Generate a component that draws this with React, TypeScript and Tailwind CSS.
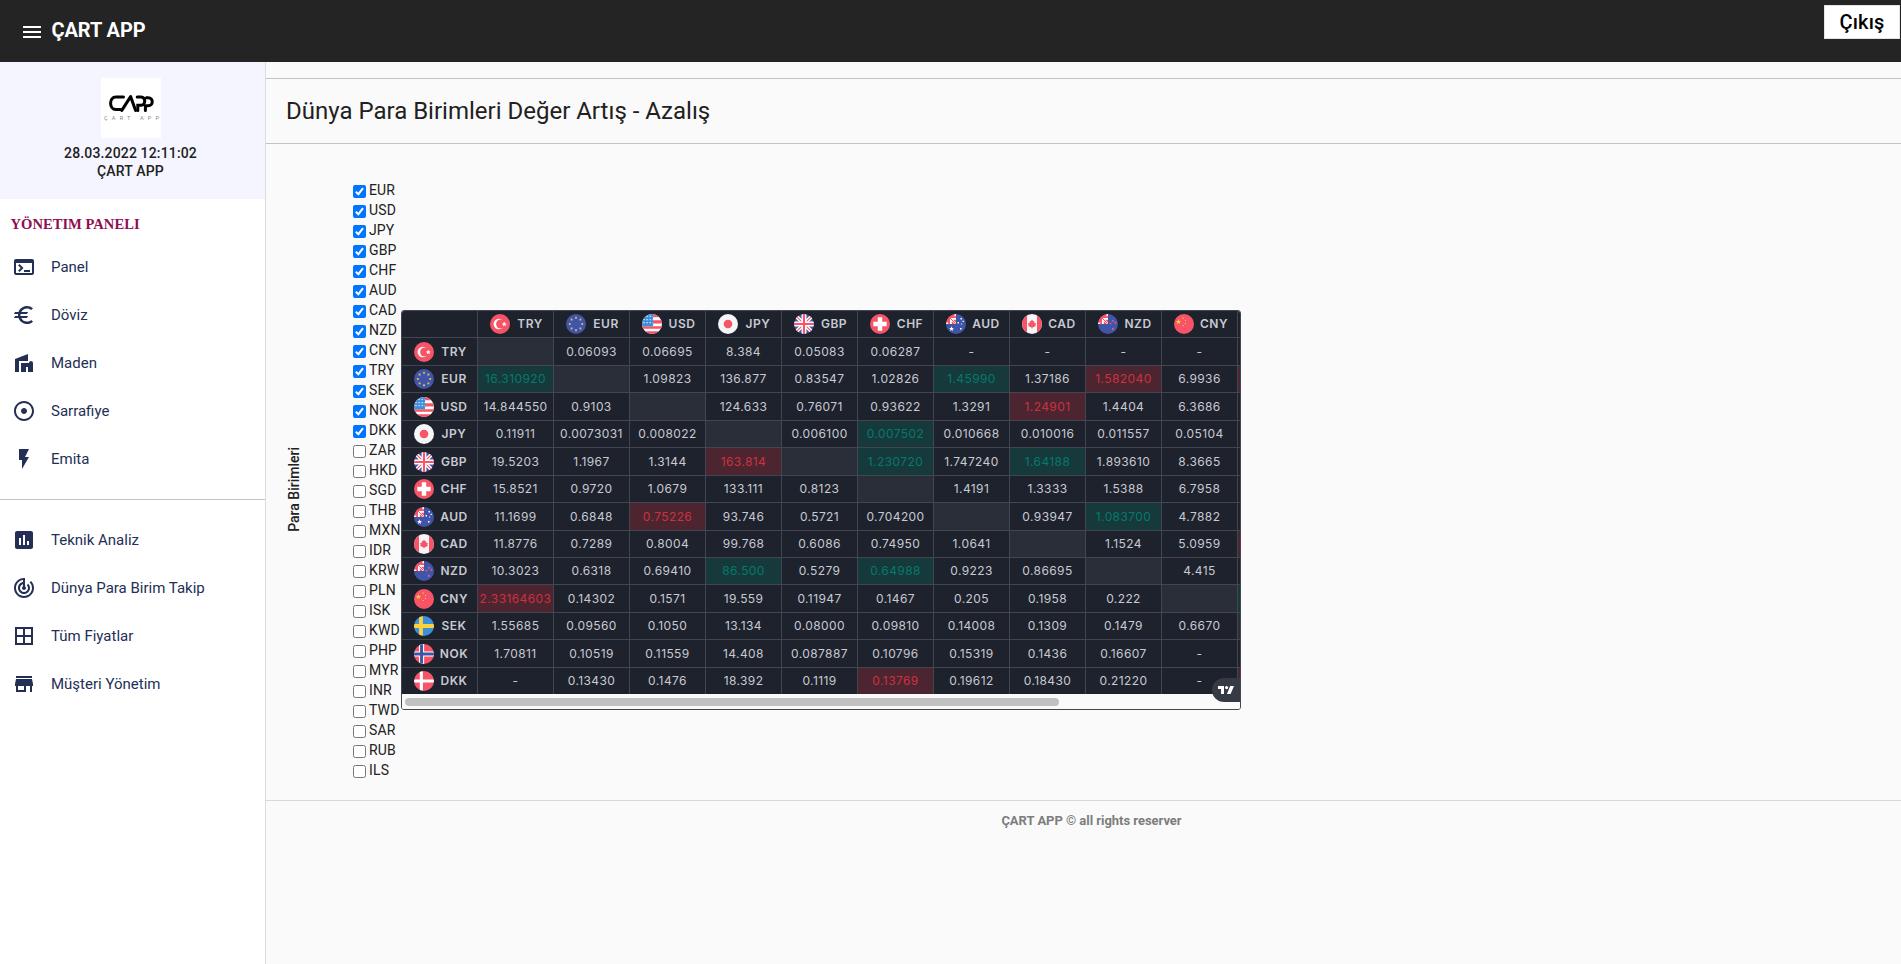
import type { ReactNode } from "react";
import type { IconType } from "react-icons";
import {
  MdAdjust,
  MdAssessment,
  MdBorderAll,
  MdEuro,
  MdFlashOn,
  MdMenu,
  MdStore,
  MdTerminal,
  MdTrackChanges,
  MdVilla,
} from "react-icons/md";

const RED = "#f75467";
const BLUE = "#4055a8";

const unionCorner = (
  <>
    <path fill={BLUE} d="M0 0h18v18H0z" />
    <path fill={RED} d="M0 0h9v9H0z" />
    <path fill="#fff" d="M0 7.6h2v1.4H0zM3.6 3.6h5.4v1.6H6.3L9 7.9V9H7.9L5.2 6.3V9H3.6z" />
    <path stroke={RED} strokeWidth=".9" d="M3.2 3.2l5.6 5.6" />
    <path fill="#fff" d="M7.6 0h1.4v2H7.6z" />
  </>
);

const stars: [number, number][] = [0, 45, 90, 135, 180, 225, 270, 315].map((a) => {
  const r = (a * Math.PI) / 180;
  return [9 + 5.6 * Math.sin(r), 9 - 5.6 * Math.cos(r)];
});

const flags: Record<string, ReactNode> = {
  TRY: (
    <>
      <path fill={RED} d="M0 0h18v18H0z" />
      <circle cx="8" cy="9" r="4.8" fill="#fff" />
      <circle cx="9.6" cy="9" r="4.1" fill={RED} />
      <path fill="#fff" d="M12.9 7l.6 1.4 1.5.1-1.1 1 .4 1.5-1.4-.8-1.3.8.3-1.5-1.4-.5 1.5-.6z" />
    </>
  ),
  EUR: (
    <>
      <path fill={BLUE} d="M0 0h18v18H0z" />
      {stars.map(([x, y], i) => (
        <rect key={i} x={x - 0.8} y={y - 0.8} width="1.6" height="1.6" fill="#e3c45c" />
      ))}
    </>
  ),
  USD: (
    <>
      <path fill="#fff" d="M0 0h18v18H0z" />
      <path fill={RED} d="M9 0h9v3H9zM9 5.6h9v3H9zM0 11h18v2.3H0zM0 15.6h18V18H0z" />
      <path fill="#3d8edb" d="M0 0h10v11H0z" />
      <path
        stroke="#d5e8fa"
        strokeWidth="1.1"
        strokeDasharray="1.2 1.6"
        d="M1.2 2.2H10M1.2 5H10M1.2 7.8H10"
      />
    </>
  ),
  JPY: (
    <>
      <path fill="#f5f6f8" d="M0 0h18v18H0z" />
      <circle cx="9" cy="9" r="3.9" fill={RED} />
    </>
  ),
  GBP: (
    <>
      <path fill={BLUE} d="M0 0h18v18H0z" />
      <path stroke="#fff" strokeWidth="3.4" d="M0 0l18 18M18 0L0 18" />
      <path stroke={RED} strokeWidth="1" d="M0 0l18 18M18 0L0 18" />
      <path stroke="#fff" strokeWidth="4.4" d="M9 0v18M0 9h18" />
      <path stroke={RED} strokeWidth="1.9" d="M9 0v18M0 9h18" />
    </>
  ),
  CHF: (
    <>
      <path fill={RED} d="M0 0h18v18H0z" />
      <path fill="#fff" d="M7 3h4v4h4v4h-4v4H7v-4H3V7h4z" />
    </>
  ),
  AUD: (
    <>
      {unionCorner}
      <path
        fill="#fff"
        d="M5 11l.6 1.5 1.5.2-1.1 1 .3 1.5-1.3-.8-1.3.8.3-1.5-1.1-1 1.5-.2zM13 3.6h1.3v1.3H13zM10.4 7.2h1.3v1.3h-1.3zM14.9 6h1.2v1.2h-1.2zM13.6 8.6h.9v.9h-.9zM12.6 12.6h1.4V14h-1.4z"
      />
    </>
  ),
  CAD: (
    <>
      <path fill="#f5f6f8" d="M0 0h18v18H0z" />
      <path fill={RED} d="M0 0h4.5v18H0zM13.5 0H18v18h-4.5z" />
      <path fill={RED} d="M9 5l1 1.6 1-.3-.1 1.6 1.6.3-.4 1.5.4.9-2.3 1.4H9.4V13h-.8v-1H7.8L5.5 10.6l.4-.9-.4-1.5 1.6-.3L7 6.3l1 .3z" />
    </>
  ),
  NZD: (
    <>
      {unionCorner}
      <path
        fill={RED}
        stroke="#b76c9a"
        strokeWidth=".3"
        d="M12.8 5.5h1.3v1.3h-1.3zM10.6 8h1.3v1.3h-1.3zM15 7.2h1.3v1.3H15zM12.6 12.6h1.5v1.5h-1.5z"
      />
    </>
  ),
  CNY: (
    <>
      <path fill={RED} d="M0 0h18v18H0z" />
      <path
        fill="#ffc83a"
        d="M4 4.6l.7 1.6 1.7.1-1.3 1.1.4 1.6L4 8.1l-1.5.9.4-1.6-1.3-1.1 1.7-.1zM7.8 3.2h1v1h-1zM9.8 5.4h1v1h-1zM9.8 8h1v1h-1zM7.8 9.8h1v1h-1z"
      />
    </>
  ),
  SEK: (
    <>
      <path fill="#3d8edb" d="M0 0h18v18H0z" />
      <path stroke="#ffd13b" strokeWidth="3.4" d="M6.3 0v18M0 9h18" />
    </>
  ),
  NOK: (
    <>
      <path fill={RED} d="M0 0h18v18H0z" />
      <path stroke="#fff" strokeWidth="4.6" d="M6.8 0v18M0 9h18" />
      <path stroke={BLUE} strokeWidth="2.7" d="M6.8 0v18M0 9h18" />
    </>
  ),
  DKK: (
    <>
      <path fill={RED} d="M0 0h18v18H0z" />
      <path stroke="#fff" strokeWidth="2.8" d="M6.6 0v18M0 9h18" />
    </>
  ),
};

function Flag({ code }: { code: string }) {
  return (
    <svg viewBox="0 0 18 18" fill="none" className="h-5 w-5 shrink-0 rounded-full">
      {flags[code]}
    </svg>
  );
}

function CurrencyLabel({ code }: { code: string }) {
  return (
    <div className="flex items-center pl-3">
      <Flag code={code} />
      <span className="w-10 text-center font-semibold tracking-[0.5px]">{code}</span>
    </div>
  );
}

const columns = ["TRY", "EUR", "USD", "JPY", "GBP", "CHF", "AUD", "CAD", "NZD", "CNY"];

type Tone = "up" | "down" | "same" | "plain";

const toneClass: Record<Tone, string> = {
  up: "bg-[#163a3c] text-[#05796a]",
  down: "bg-[#4c2531] text-[#cd3140]",
  same: "bg-[#2a2e39]",
  plain: "",
};

/* A leading "+" marks a rise, "!" a fall and "#" a currency against itself. */
const rows: { code: string; height: string; cells: string; edge: Tone }[] = [
  { code: "TRY", height: "h-7", edge: "plain", cells: "# 0.06093 0.06695 8.384 0.05083 0.06287 - - - -" },
  { code: "EUR", height: "h-[27px]", edge: "down", cells: "+16.310920 # 1.09823 136.877 0.83547 1.02826 +1.45990 1.37186 !1.582040 6.9936" },
  { code: "USD", height: "h-7", edge: "plain", cells: "14.844550 0.9103 # 124.633 0.76071 0.93622 1.3291 !1.24901 1.4404 6.3686" },
  { code: "JPY", height: "h-[27px]", edge: "plain", cells: "0.11911 0.0073031 0.008022 # 0.006100 +0.007502 0.010668 0.010016 0.011557 0.05104" },
  { code: "GBP", height: "h-7", edge: "plain", cells: "19.5203 1.1967 1.3144 !163.814 # +1.230720 1.747240 +1.64188 1.893610 8.3665" },
  { code: "CHF", height: "h-[27px]", edge: "plain", cells: "15.8521 0.9720 1.0679 133.111 0.8123 # 1.4191 1.3333 1.5388 6.7958" },
  { code: "AUD", height: "h-7", edge: "plain", cells: "11.1699 0.6848 !0.75226 93.746 0.5721 0.704200 # 0.93947 +1.083700 4.7882" },
  { code: "CAD", height: "h-[27px]", edge: "down", cells: "11.8776 0.7289 0.8004 99.768 0.6086 0.74950 1.0641 # 1.1524 5.0959" },
  { code: "NZD", height: "h-[27px]", edge: "plain", cells: "10.3023 0.6318 0.69410 +86.500 0.5279 +0.64988 0.9223 0.86695 # 4.415" },
  { code: "CNY", height: "h-7", edge: "up", cells: "!2.33164603 0.14302 0.1571 19.559 0.11947 0.1467 0.205 0.1958 0.222 #" },
  { code: "SEK", height: "h-[27px]", edge: "same", cells: "1.55685 0.09560 0.1050 13.134 0.08000 0.09810 0.14008 0.1309 0.1479 0.6670" },
  { code: "NOK", height: "h-7", edge: "plain", cells: "1.70811 0.10519 0.11559 14.408 0.087887 0.10796 0.15319 0.1436 0.16607 -" },
  { code: "DKK", height: "h-[27px]", edge: "down", cells: "- 0.13430 0.1476 18.392 0.1119 !0.13769 0.19612 0.18430 0.21220 -" },
];

function readCell(raw: string): { text: string; tone: Tone } {
  if (raw === "#") return { text: "", tone: "same" };
  if (raw[0] === "+") return { text: raw.slice(1), tone: "up" };
  if (raw[0] === "!") return { text: raw.slice(1), tone: "down" };
  return { text: raw, tone: "plain" };
}

function RatesTable() {
  return (
    <div className="relative mt-32 h-[400px] w-[840px] shrink-0 overflow-hidden rounded-[3px] border border-[#434651] bg-[#fafafa] font-['Inter',sans-serif] text-xs leading-4 text-[#c8cad2]">
      <div className="h-[383px] overflow-hidden bg-[#1e222d]">
        <div className="flex h-[27px] border-b border-[#434651]">
          <div className="w-[76px] shrink-0 border-r border-[#434651]" />
          {columns.map((code) => (
            <div key={code} className="flex w-[76px] shrink-0 items-center border-r border-[#434651]">
              <CurrencyLabel code={code} />
            </div>
          ))}
        </div>
        {rows.map((row) => (
          <div key={row.code} className={`flex border-b border-[#434651] ${row.height}`}>
            <div className="flex w-[76px] shrink-0 items-center border-r border-[#434651]">
              <CurrencyLabel code={row.code} />
            </div>
            {row.cells.split(" ").map((raw, i) => {
              const cell = readCell(raw);
              return (
                <div
                  key={i}
                  className={`flex w-[76px] shrink-0 items-center justify-center border-r border-[#434651] tracking-[0.4px] ${toneClass[cell.tone]}`}
                >
                  {cell.text}
                </div>
              );
            })}
            <div className={`grow ${toneClass[row.edge]}`} />
          </div>
        ))}
      </div>
      <div className="h-[15px] bg-[#fafafa] pl-[3px] pt-1">
        <div className="h-2 w-[654px] rounded-full bg-[#c1c1c1]" />
      </div>
      <div className="absolute bottom-[7px] right-0 flex h-6 w-7 items-center rounded-l-full bg-[#363a45] pl-1.5">
        <svg viewBox="0 0 16 8" className="h-2 w-4" fill="#fff">
          <path d="M0 0h6v8H3V3H0zM12.2 0H16l-3.4 8H8.9z" />
          <circle cx="8.6" cy="1.6" r="1.6" />
        </svg>
      </div>
    </div>
  );
}

const currencies =
  "EUR USD JPY GBP CHF AUD CAD NZD CNY TRY SEK NOK DKK ZAR HKD SGD THB MXN IDR KRW PLN ISK KWD PHP MYR INR TWD SAR RUB ILS".split(" ");

function CurrencyOption({ code, checked }: { code: string; checked: boolean }) {
  return (
    <label className="flex h-5 items-start gap-[3px]">
      {checked ? (
        <span className="mt-[3px] flex h-[13px] w-[13px] items-center justify-center rounded-[2px] bg-[#0075ff]">
          <svg viewBox="0 0 13 13" className="h-[13px] w-[13px]" fill="none" stroke="#fff" strokeWidth="2">
            <path d="M2.8 6.7l2.6 2.5 4.6-6" />
          </svg>
        </span>
      ) : (
        <span className="mt-[3px] h-[13px] w-[13px] rounded-[2.5px] border border-[#767676] bg-white" />
      )}
      <span className="text-sm leading-[17px] tracking-[0.15px]">{code}</span>
    </label>
  );
}

function NavItem({ icon: Icon, label }: { icon: IconType; label: string }) {
  return (
    <a className="flex h-12 items-center gap-[15px] pl-3 text-[15px] text-[#232f55]">
      <Icon className="h-6 w-6" />
      <span>{label}</span>
    </a>
  );
}

const mainNav: [IconType, string][] = [
  [MdTerminal, "Panel"],
  [MdEuro, "Döviz"],
  [MdVilla, "Maden"],
  [MdAdjust, "Sarrafiye"],
  [MdFlashOn, "Emita"],
];

const toolsNav: [IconType, string][] = [
  [MdAssessment, "Teknik Analiz"],
  [MdTrackChanges, "Dünya Para Birim Takip"],
  [MdBorderAll, "Tüm Fiyatlar"],
  [MdStore, "Müşteri Yönetim"],
];

function Logo() {
  return (
    <svg viewBox="0 0 60 60" className="h-[60px] w-[60px] bg-white" fill="none">
      <g stroke="#000" strokeWidth="3" strokeLinecap="round">
        <path d="M22.5 19H15c-3.6 0-5.4 2.8-5.4 6.2s1.800 6.400 5.400 6.400h4.500" />
        <path d="M20.800 32.400L29.600 18.600 34.600 32.400" strokeLinejoin="round" />
        <path d="M36.800 32.400V27.200h3.400c4.800 0 4.600-8.200 0-8.200h-4" />
        <path d="M44.400 32.400V27.800h2.800c5.400 0 5.400-8 0-8h-1.800" />
      </g>
      <text
        x="3"
        y="42.400"
        fontSize="5.600"
        fill="#8a8a8a"
        textLength="55"
        className="font-['Roboto',sans-serif]"
      >
        ÇART APP
      </text>
    </svg>
  );
}

function Sidebar() {
  return (
    <aside className="w-[266px] shrink-0 border-r border-[#dcdcdf] bg-white">
      <div className="flex h-[137px] flex-col items-center bg-[#f5f5ff] pr-1 pt-4">
        <Logo />
        <div className="mt-[6px] text-center text-sm font-medium leading-[18px] tracking-[0.15px]">
          <p>28.03.2022 12:11:02</p>
          <p>ÇART APP</p>
        </div>
      </div>
      <h2 className="h-11 pl-[10.5px] pt-4 font-['Liberation_Serif',serif] text-[14.6px] font-bold leading-[18px] text-[#8e0e50]">
        YÖNETIM PANELI
      </h2>
      <nav>
        {mainNav.map(([icon, label]) => (
          <NavItem key={label} icon={icon} label={label} />
        ))}
      </nav>
      <hr className="mb-4 mt-4 border-[#c3c3c3]" />
      <nav>
        {toolsNav.map(([icon, label]) => (
          <NavItem key={label} icon={icon} label={label} />
        ))}
      </nav>
    </aside>
  );
}

export default function App() {
  return (
    <div className="flex h-[964px] w-full flex-col overflow-hidden bg-[#fafafa] font-['Roboto',sans-serif] text-[#212121]">
      <header className="flex h-[62px] shrink-0 items-start justify-between bg-[#242424] pr-px">
        <div className="flex items-center pl-5">
          <MdMenu className="mt-5 h-6 w-6 text-white" />
          <h1 className="ml-[7.500px] mt-4 text-xl font-bold leading-7 tracking-[-0.1px] text-white">ÇART APP</h1>
        </div>
        <button className="mt-[5px] h-[34px] w-[76px] border border-[#e4e4e4] bg-white text-xl font-medium leading-8 tracking-[0.15px] text-black">
          Çıkış
        </button>
      </header>
      <div className="flex min-h-0 grow">
        <Sidebar />
        <main className="min-w-0 grow">
          <div className="mt-4 flex h-[66px] items-center border-y border-[#c3c3c3] pl-5">
            <h2 className="text-2xl leading-8">Dünya Para Birimleri Değer Artış - Azalış</h2>
          </div>
          <div className="flex h-[656px] items-start pt-[38px]">
            <div className="mt-[265px] w-[87px] pl-5">
              <span className="block rotate-180 text-sm font-medium leading-4 [writing-mode:vertical-rl]">
                Para Birimleri
              </span>
            </div>
            <div className="w-12 shrink-0">
              {currencies.map((code, i) => (
                <CurrencyOption key={code} code={code} checked={i < 13} />
              ))}
            </div>
            <RatesTable />
          </div>
          <footer className="border-t border-[#d9d9d9] pl-4 pt-3 text-center text-[13px] font-bold leading-4 tracking-[-0.03px] text-[#7d7d7d]">
            ÇART APP © all rights reserver
          </footer>
        </main>
      </div>
    </div>
  );
}
